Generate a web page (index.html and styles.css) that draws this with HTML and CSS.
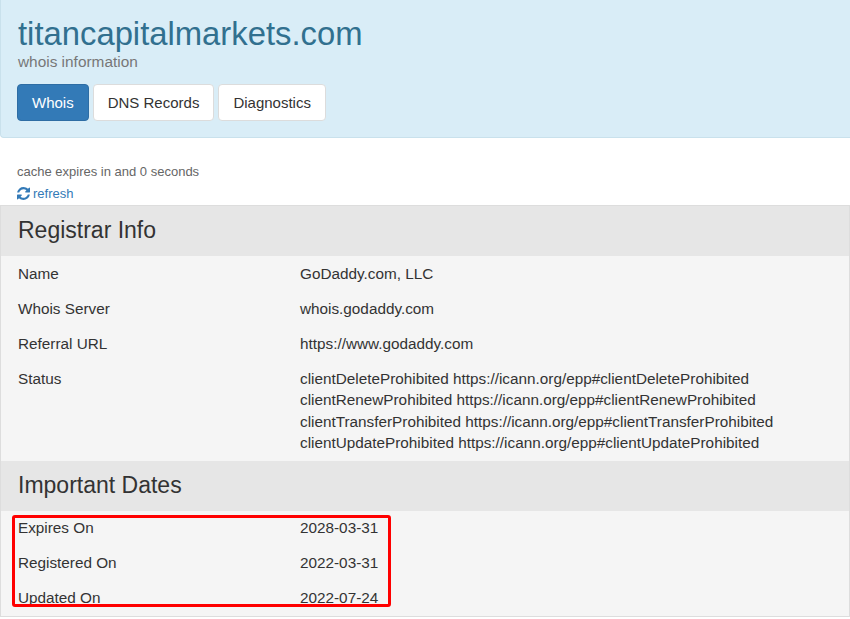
FILE: index.html
```html
<!doctype html>
<html lang="en">

<head>
  <meta charset="UTF-8" />
  <meta name="viewport" content="width=device-width, initial-scale=1.0" />
  <title>titancapitalmarkets.com - whois information</title>
  <link rel="stylesheet" href="styles.css">
</head>

<body>
  <div class="header">
    <h1>titancapitalmarkets.com</h1>
    <div class="subtitle">whois information</div>
    <div class="tabs">
      <a class="btn btn-active" href="#">Whois</a>
      <a class="btn" href="#">DNS Records</a>
      <a class="btn" href="#">Diagnostics</a>
    </div>
  </div>

  <div class="cache">
    <div>cache expires in and 0 seconds</div>
    <a class="refresh" href="#">
      <svg class="icon" viewBox="0 0 1536 1536" aria-hidden="true">
        <path fill="currentColor"
          d="M1511 928q0 5-1 7-64 268-268 434.5t-478 166.5q-146 0-282.5-55t-243.5-157l-129 129q-19 19-45 19t-45-19-19-45v-448q0-26 19-45t45-19h448q26 0 45 19t19 45-19 45l-137 137q71 66 161 102t187 36q134 0 250-65t186-179q11-17 53-117 8-23 30-23h192q13 0 22.5 9.5t9.5 22.5zm25-800v448q0 26-19 45t-45 19h-448q-26 0-45-19t-19-45 19-45l138-138q-148-137-349-137-134 0-250 65t-186 179q-11 17-53 117-8 23-30 23h-199q-13 0-22.5-9.5t-9.5-22.5v-7q65-268 270-434.5t480-166.5q146 0 284 55.5t245 156.5l130-129q19-19 45-19t45 19 19 45z" />
      </svg>refresh</a>
  </div>

  <div class="whois">
    <h2 class="section-title">Registrar Info</h2>
    <table class="info">
      <tr>
        <td class="label">Name</td>
        <td>GoDaddy.com, LLC</td>
      </tr>
      <tr>
        <td class="label">Whois Server</td>
        <td>whois.godaddy.com</td>
      </tr>
      <tr>
        <td class="label">Referral URL</td>
        <td>https://www.godaddy.com</td>
      </tr>
      <tr>
        <td class="label">Status</td>
        <td>
          clientDeleteProhibited https://icann.org/epp#clientDeleteProhibited<br>
          clientRenewProhibited https://icann.org/epp#clientRenewProhibited<br>
          clientTransferProhibited https://icann.org/epp#clientTransferProhibited<br>
          clientUpdateProhibited https://icann.org/epp#clientUpdateProhibited
        </td>
      </tr>
    </table>

    <h2 class="section-title">Important Dates</h2>
    <div class="dates">
      <table class="info">
        <tr>
          <td class="label">Expires On</td>
          <td>2028-03-31</td>
        </tr>
        <tr>
          <td class="label">Registered On</td>
          <td>2022-03-31</td>
        </tr>
        <tr>
          <td class="label">Updated On</td>
          <td>2022-07-24</td>
        </tr>
      </table>
      <div class="highlight"></div>
    </div>
  </div>
</body>

</html>
```

FILE: styles.css
```css
body {
  font-family: 'Liberation Sans', Arial, sans-serif;
  background-color: #ffffff;
  color: #333;
  margin: 0;
}

a {
  text-decoration: none;
}

.header {
  background-color: #d9edf7;
  border-left: 1px solid #c9e1ec;
  border-bottom: 1px solid #c9e1ec;
  border-bottom-left-radius: 4px;
  padding: 16px 16px 16px;
}

h1 {
  margin: 0 0 0 1px;
  font-size: 32.8px;
  line-height: 35px;
  font-weight: normal;
  color: #31708f;
}

.subtitle {
  margin-left: 1px;
  font-size: 15.4px;
  line-height: 21px;
  color: #777;
}

.tabs {
  display: flex;
  gap: 4px;
  margin-top: 12px;
}

.btn {
  display: inline-block;
  font-size: 15px;
  line-height: 21px;
  padding: 7px 14px;
  border: 1px solid #dcdcdc;
  border-radius: 4px;
  background-color: #ffffff;
  color: #333;
}

.btn-active {
  background-color: #337ab7;
  border-color: #2e6da4;
  color: #ffffff;
}

.cache {
  padding: 23px 16px 0 17px;
  font-size: 13px;
  line-height: 22px;
  color: #666;
}

.refresh {
  color: #337ab7;
}

.icon {
  width: 13px;
  height: 13px;
  margin-right: 3px;
  vertical-align: -2px;
}

.whois {
  border: 1px solid #dddddd;
  background-color: #f5f5f5;
}

.section-title {
  margin: 0;
  padding: 12.35px 17px;
  font-size: 23px;
  line-height: 25.3px;
  font-weight: normal;
  background-color: #e6e6e6;
  color: #333;
}

.info {
  width: 100%;
  border-collapse: collapse;
  font-size: 15.3px;
  line-height: 21.6px;
}

.info td {
  padding: 6.7px 17px;
  vertical-align: top;
}

.info td.label {
  width: 248px;
}

.dates {
  position: relative;
}

/* red marker drawn round the dates */
.highlight {
  position: absolute;
  top: 4px;
  left: 11px;
  width: 373px;
  height: 86px;
  border: 3px solid #ff0000;
  border-radius: 3px;
}
```
